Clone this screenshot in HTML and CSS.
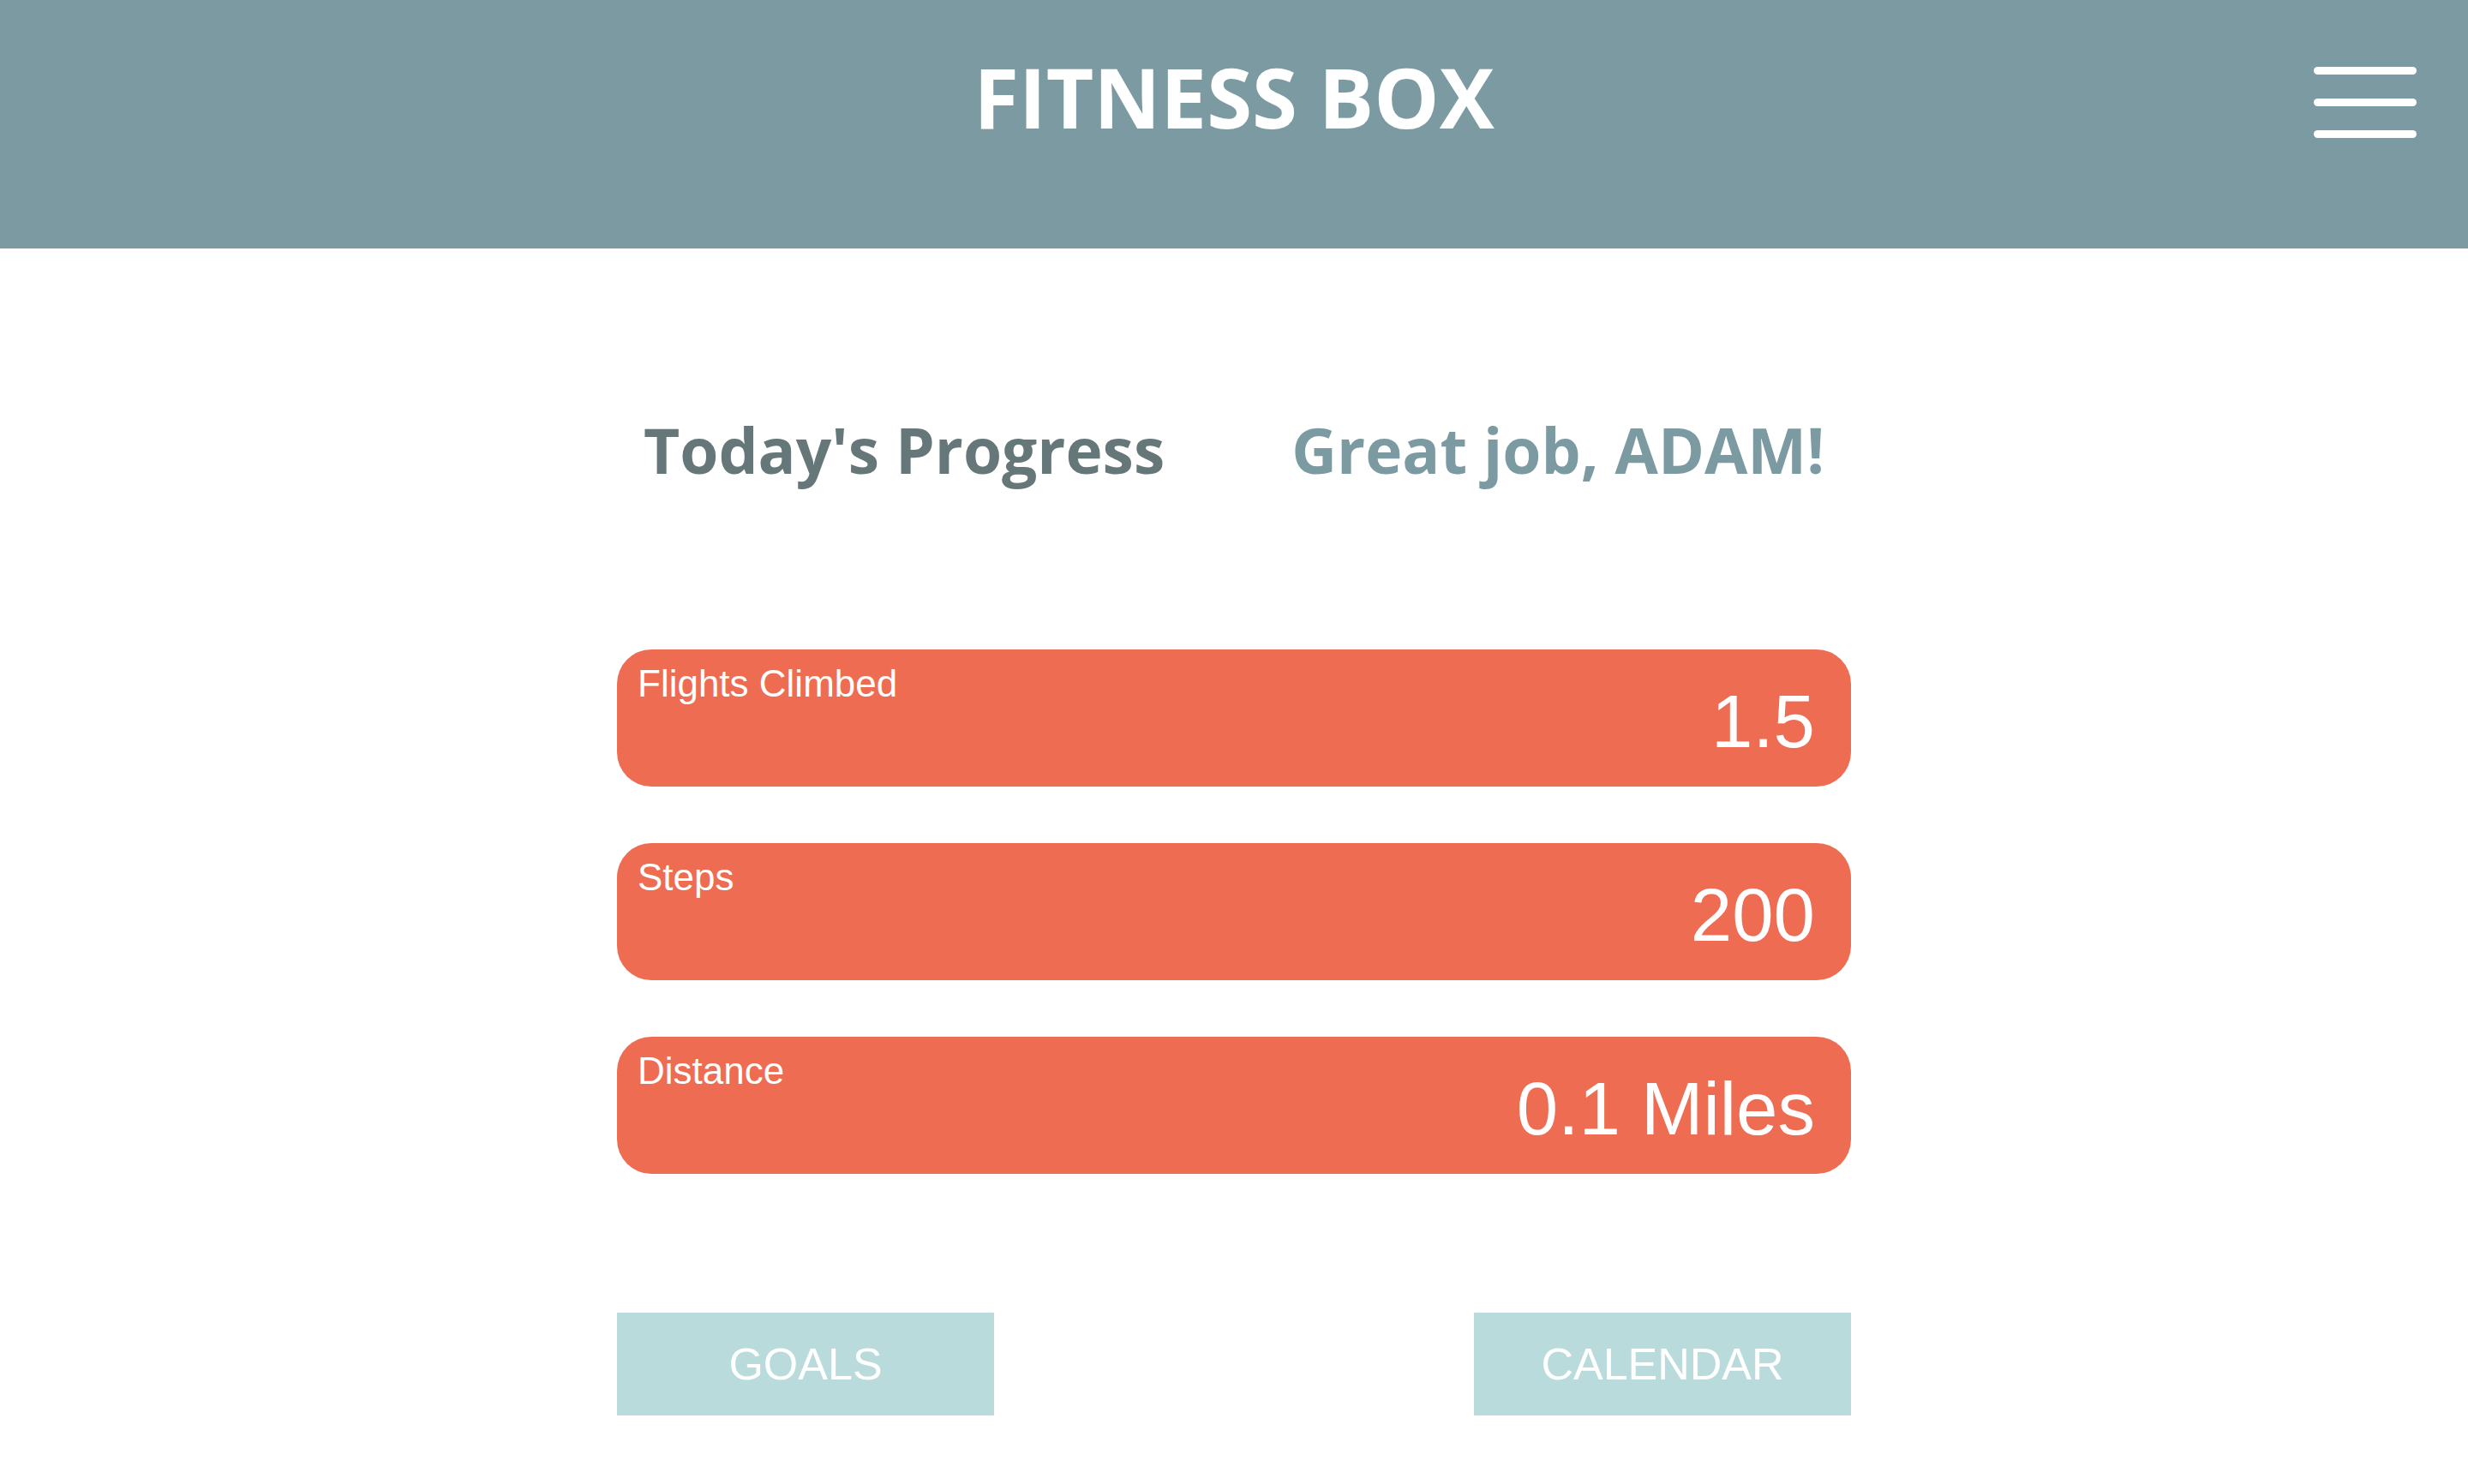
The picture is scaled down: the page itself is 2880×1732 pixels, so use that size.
FILE: index.html
```html
<!DOCTYPE html>
<html lang="en">
<head>
<meta charset="utf-8">
<title>Fitness Box</title>
<link rel="stylesheet" href="styles.css">
</head>
<body>
<header class="topbar">
  <div class="topbar-spacer"></div>
  <h1 class="brand">FITNESS BOX</h1>
  <button class="menu-btn" aria-label="Menu">
    <span class="menu-line"></span>
    <span class="menu-line"></span>
    <span class="menu-line"></span>
  </button>
</header>
<main class="content">
  <section class="greeting">
    <h2 class="progress-title">Today's Progress</h2>
    <h2 class="cheer">Great job, ADAM!</h2>
  </section>
  <section class="stats">
    <div class="stat-card">
      <div class="stat-label">Flights Climbed</div>
      <div class="stat-value">1.5</div>
    </div>
    <div class="stat-card">
      <div class="stat-label">Steps</div>
      <div class="stat-value">200</div>
    </div>
    <div class="stat-card">
      <div class="stat-label">Distance</div>
      <div class="stat-value">0.1 Miles</div>
    </div>
  </section>
  <nav class="actions">
    <a class="action-btn" href="#">GOALS</a>
    <a class="action-btn" href="#">CALENDAR</a>
  </nav>
</main>
</body>
</html>
```

FILE: styles.css
```css
html, body {
  margin: 0;
  padding: 0;
  background: #ffffff;
}

body {
  font-family: "Liberation Sans", Arial, sans-serif;
}

.topbar {
  height: 290px;
  box-sizing: border-box;
  background: #7c9aa1;
  display: grid;
  grid-template-columns: 1fr auto 1fr;
  align-items: start;
  padding-top: 65px;
}

.brand {
  margin: 0;
  font-family: "Open Sans", sans-serif;
  font-weight: 700;
  font-size: 96px;
  line-height: 96px;
  color: #ffffff;
}

.menu-btn {
  justify-self: end;
  margin: 13px 60px 0 0;
  padding: 0;
  border: 0;
  background: transparent;
  width: 120px;
  display: flex;
  flex-direction: column;
  gap: 28px;
  cursor: pointer;
}

.menu-line {
  display: block;
  width: 120px;
  height: 9px;
  border-radius: 5px;
  background: #ffffff;
}

.content {
  width: 1440px;
  margin: 0 auto;
  padding-top: 198px;
}

.greeting {
  display: flex;
  justify-content: center;
  gap: 148px;
}

.progress-title,
.cheer {
  margin: 0;
  font-family: "Open Sans", sans-serif;
  font-weight: 700;
  font-size: 73px;
  line-height: 73px;
}

.progress-title {
  color: #66777a;
}

.cheer {
  color: #7c9aa1;
}

.stats {
  margin-top: 197px;
  display: flex;
  flex-direction: column;
  gap: 66px;
}

.stat-card {
  height: 160px;
  box-sizing: border-box;
  background: #ee6c52;
  border-radius: 40px;
  padding: 18px 42px 0 24px;
  color: #ffffff;
  display: flex;
  flex-direction: column;
}

.stat-label {
  font-size: 44px;
  line-height: 44px;
}

.stat-value {
  font-size: 87px;
  line-height: 44px;
  text-align: right;
}

.actions {
  margin-top: 162px;
  display: flex;
  justify-content: space-between;
}

.action-btn {
  width: 440px;
  height: 120px;
  background: #badbdc;
  color: #ffffff;
  text-decoration: none;
  font-size: 52px;
  display: flex;
  align-items: center;
  justify-content: center;
}
```
